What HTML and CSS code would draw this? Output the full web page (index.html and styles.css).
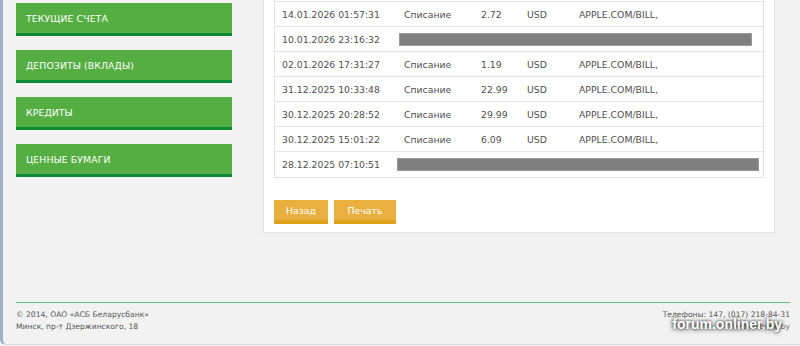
FILE: index.html
```html
<!DOCTYPE html>
<html lang="ru">
<head>
<meta charset="utf-8">
<title>АСБ Беларусбанк</title>
<link rel="stylesheet" href="styles.css">
</head>
<body>
<div class="window">
  <div class="content">
    <nav class="sidebar">
      <a class="menu-btn">Текущие счета</a>
      <a class="menu-btn">Депозиты (вклады)</a>
      <a class="menu-btn">Кредиты</a>
      <a class="menu-btn">Ценные бумаги</a>
    </nav>
    <main class="panel">
      <div class="table">
        <div class="row row-cut"></div>
        <div class="row"><span>14.01.2026 01:57:31</span><span>Списание</span><span>2.72</span><span>USD</span><span>APPLE.COM/BILL,</span></div>
        <div class="row"><span>10.01.2026 23:16:32</span><span class="redact redact-a"></span></div>
        <div class="row"><span>02.01.2026 17:31:27</span><span>Списание</span><span>1.19</span><span>USD</span><span>APPLE.COM/BILL,</span></div>
        <div class="row"><span>31.12.2025 10:33:48</span><span>Списание</span><span>22.99</span><span>USD</span><span>APPLE.COM/BILL,</span></div>
        <div class="row"><span>30.12.2025 20:28:52</span><span>Списание</span><span>29.99</span><span>USD</span><span>APPLE.COM/BILL,</span></div>
        <div class="row"><span>30.12.2025 15:01:22</span><span>Списание</span><span>6.09</span><span>USD</span><span>APPLE.COM/BILL,</span></div>
        <div class="row"><span>28.12.2025 07:10:51</span><span class="redact redact-b"></span></div>
      </div>
      <div class="actions">
        <a class="act-btn">Назад</a>
        <a class="act-btn act-wide">Печать</a>
      </div>
    </main>
  </div>
  <footer class="footer">
    <div class="foot-left">
      <div>© 2014, ОАО «АСБ Беларусбанк»</div>
      <div>Минск, пр-т Дзержинского, 18</div>
    </div>
    <div class="foot-right">
      <div>Телефоны: 147, (017) 218-84-31</div>
      <div class="foot-hidden">belarusbank.by</div>
      <span class="watermark">forum.onliner.by</span>
    </div>
  </footer>
</div>
</body>
</html>
```

FILE: styles.css
```css
html, body {
  margin: 0;
  padding: 0;
  background: #f2f2f2;
  overflow: hidden;
}
body {
  font-family: "DejaVu Sans", Verdana, sans-serif;
  color: #555;
}
.window {
  height: 344px;
  border-left: 3px solid #9db0c8;
  border-bottom: 1px solid #d8dbe0;
  border-bottom-left-radius: 6px;
  background: #f2f2f2;
}
.content {
  display: flex;
  align-items: flex-start;
  padding-left: 13px;
  height: 233px;
}
.sidebar {
  width: 216px;
  padding-top: 3px;
  display: flex;
  flex-direction: column;
  gap: 14px;
}
.menu-btn {
  display: flex;
  align-items: center;
  height: 30px;
  padding-left: 10px;
  background: #54ae41;
  border-bottom: 3px solid #0c8a35;
  color: #fff;
  font-size: 9.3px;
  text-transform: uppercase;
  letter-spacing: 0.1px;
}
.panel {
  margin-left: 31px;
  width: 490px;
  height: 232px;
  padding: 0 10px;
  background: #fff;
  border: 1px solid #e3e3e3;
  border-top: none;
}
.table {
  border: 1px solid #e3e3e3;
  border-top: none;
  font-size: 9.3px;
  color: #505050;
}
.row {
  display: grid;
  grid-template-columns: 122px 77px 46px 52px 1fr;
  align-items: center;
  height: 24px;
  border-bottom: 1px solid #e3e3e3;
}
.row:last-child { border-bottom: none; height: 25px; }
.row span { padding-left: 7px; white-space: nowrap; }
.row-cut { height: 1px; }
.redact {
  grid-column: 2 / -1;
  height: 11px;
  background: #7f7f7f;
  border: 1px solid #9a9a9a;
  padding: 0 !important;
}
.redact-a { margin-left: 2px; margin-right: 11px; }
.redact-b { margin-left: 0; margin-right: 4px; }
.actions {
  display: flex;
  gap: 6px;
  margin-top: 22px;
}
.act-btn {
  display: flex;
  align-items: center;
  justify-content: center;
  width: 54px;
  height: 20px;
  background: #e9b03f;
  border-bottom: 4px solid #e1a11c;
  color: #fff;
  font-size: 9.3px;
}
.act-wide { width: 62px; }
.footer {
  margin: 69px 10px 0 13px;
  border-top: 1px solid #62bb80;
  padding-top: 6px;
  display: flex;
  justify-content: space-between;
  font-size: 7.6px;
  line-height: 12px;
  color: #555;
}
.foot-right {
  text-align: right;
  position: relative;
}
.foot-hidden { color: #777; }
.watermark {
  position: absolute;
  right: 8px;
  top: 7px;
  font-family: "Liberation Sans", Arial, sans-serif;
  font-weight: bold;
  font-size: 14px;
  line-height: 16px;
  color: #fff;
  text-shadow: 0 0 3px rgba(0,0,0,0.8), 0 1px 5px rgba(0,0,0,0.6);
}
```
